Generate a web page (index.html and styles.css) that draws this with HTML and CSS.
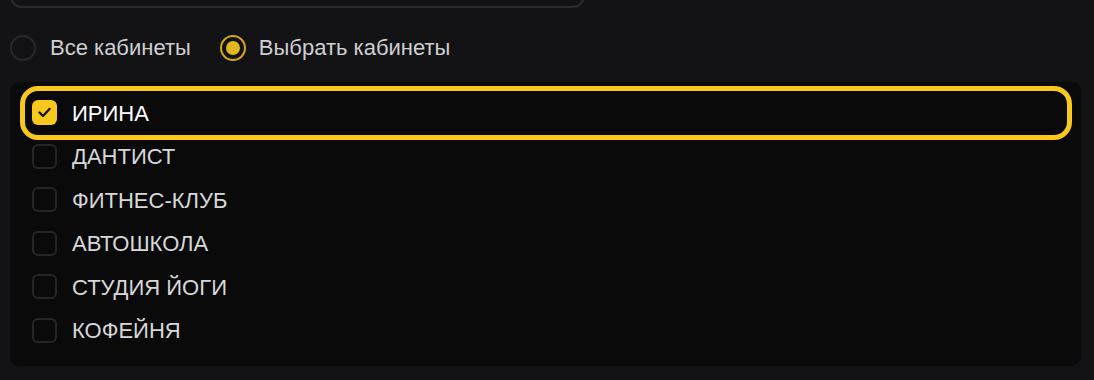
FILE: index.html
```html
<!DOCTYPE html>
<html lang="ru">
<head>
<meta charset="UTF-8">
<meta name="viewport" content="width=device-width, initial-scale=1.0">
<title>Кабинеты</title>
<link rel="stylesheet" href="styles.css">
</head>
<body>
<div class="container">
    <div class="search-box"></div>

    <div class="radio-group">
        <label class="radio">
            <span class="radio-circle"></span>
            <span class="radio-label">Все кабинеты</span>
        </label>
        <label class="radio checked">
            <span class="radio-circle"><span class="radio-dot"></span></span>
            <span class="radio-label">Выбрать кабинеты</span>
        </label>
    </div>

    <div class="cabinet-list">
        <div class="cabinet selected">
            <span class="checkbox checked">
                <svg width="25" height="25" viewBox="0 0 25 25"><path d="M7.5 12.5 L11 16 L17.5 9" fill="none" stroke="#161616" stroke-width="2.4" stroke-linecap="round" stroke-linejoin="round"/></svg>
            </span>
            <span class="cabinet-name">ИРИНА</span>
        </div>
        <div class="cabinet">
            <span class="checkbox"></span>
            <span class="cabinet-name">ДАНТИСТ</span>
        </div>
        <div class="cabinet">
            <span class="checkbox"></span>
            <span class="cabinet-name">ФИТНЕС-КЛУБ</span>
        </div>
        <div class="cabinet">
            <span class="checkbox"></span>
            <span class="cabinet-name">АВТОШКОЛА</span>
        </div>
        <div class="cabinet">
            <span class="checkbox"></span>
            <span class="cabinet-name">СТУДИЯ ЙОГИ</span>
        </div>
        <div class="cabinet">
            <span class="checkbox"></span>
            <span class="cabinet-name">КОФЕЙНЯ</span>
        </div>
    </div>
</div>
</body>
</html>
```

FILE: styles.css
```css
body {
    margin: 0;
    padding: 0;
    font-family: "Liberation Sans", Arial, sans-serif;
    background-color: #131315;
    color: #d6d6d6;
    height: 380px;
    overflow: hidden;
}

.container {
    padding: 0 12px 0 10px;
}

.search-box {
    width: 571px;
    height: 40px;
    margin-top: -36px;
    border: 2px solid #2b2b2e;
    border-radius: 12px;
}

.radio-group {
    display: flex;
    align-items: center;
    gap: 29px;
    margin-top: 27px;
    height: 26px;
}

.radio {
    display: flex;
    align-items: center;
    gap: 14px;
    cursor: pointer;
}

.radio-circle {
    width: 26px;
    height: 26px;
    box-sizing: border-box;
    border: 2px solid #28282b;
    border-radius: 50%;
    display: flex;
    align-items: center;
    justify-content: center;
}

.radio.checked .radio-circle {
    border-color: #d2a91c;
}

.radio.checked {
    gap: 13px;
}

.radio-dot {
    width: 14px;
    height: 14px;
    border-radius: 50%;
    background-color: #e0b622;
}

.radio-label {
    font-size: 22px;
    color: #cfcfd2;
}

.cabinet-list {
    margin-top: 21px;
    background-color: #0a0a0a;
    border-radius: 10px;
    padding: 9px 15px 15px;
    box-shadow: inset -1px -1px 0 #151517;
}

.cabinet {
    display: flex;
    align-items: center;
    gap: 15px;
    height: 43.5px;
    padding-left: 7px;
    border-radius: 13px;
}

.cabinet.selected {
    outline: 5px solid #f8c81c;
    outline-offset: 0;
}

.checkbox {
    width: 25px;
    height: 25px;
    box-sizing: border-box;
    border: 2px solid #262628;
    border-radius: 6px;
    flex-shrink: 0;
}

.checkbox.checked {
    border: none;
    background-color: #f8c81c;
}

.checkbox svg {
    display: block;
}

.cabinet-name {
    font-size: 22px;
    color: #d8d8da;
    padding-top: 2px;
}

.cabinet.selected .cabinet-name {
    color: #ffffff;
}
```
